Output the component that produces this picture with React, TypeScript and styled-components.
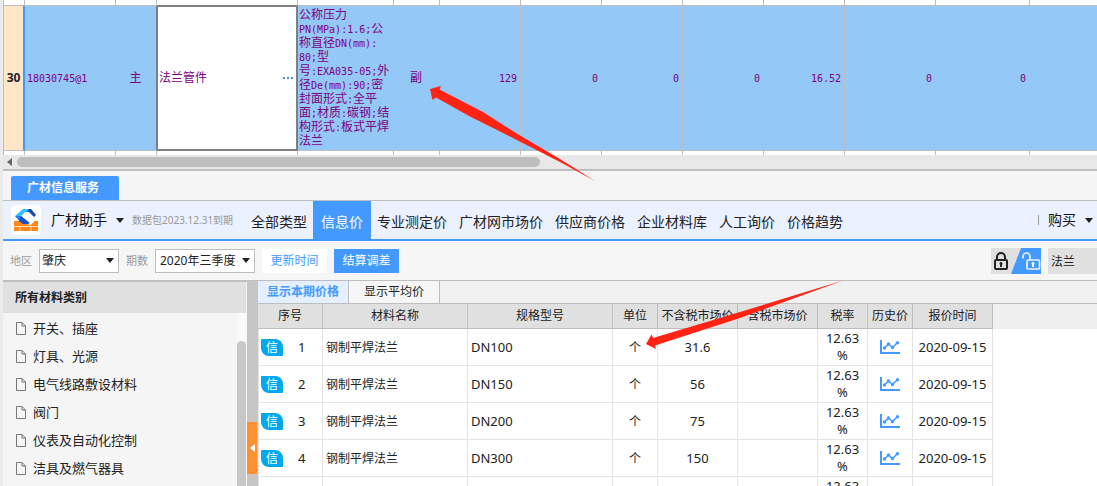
import React from "react";
import styled, { createGlobalStyle, css } from "styled-components";

const Global = createGlobalStyle`
  *, *::before, *::after { box-sizing: border-box; }
  body {
    margin: 0;
    background: #f5f5f5;
    color: #222;
    font: 12px/16px "Noto Sans", "Noto Sans CJK SC", sans-serif;
  }
  button, input, select { font: inherit; color: inherit; border: 0; padding: 0; border-radius: 0; }
  button { background: none; }
  a { color: inherit; text-decoration: none; }
  table { border-collapse: separate; border-spacing: 0; table-layout: fixed; width: 100%; }
  th, td { padding: 0; font-weight: 400; }
`;

const Window = styled.div`
  position: relative;
  display: flex;
  flex-direction: column;
  height: 100vh;
  overflow: hidden;
  border-left: 3px solid #ebebeb;
`;

/* ---------- quota grid ---------- */

const Grid = styled.table`
  flex: none;
  background: #fff;
  color: #800080;
`;

const gridLine = "1px solid #bebebe";

const EdgeCell = styled.td<{ $first?: boolean; $last?: boolean; $bottomLine?: string }>`
  height: ${(p) => (p.$bottomLine ? 6 : 4)}px;
  line-height: 0;
  border-left: ${(p) => (p.$first ? gridLine : 0)};
  border-right: ${(p) => (p.$last ? 0 : gridLine)};
  border-bottom: ${(p) => (p.$bottomLine ? `1px solid ${p.$bottomLine}` : 0)};
`;

const Cell = styled.td<{ $align?: string; $beforeEdit?: boolean; $last?: boolean }>`
  height: 145px;
  padding: 0 3px 0 2px;
  line-height: 14px;
  text-align: ${(p) => p.$align ?? "left"};
  vertical-align: middle;
  background: #93c8f7;
  border-right: ${(p) => (p.$last ? 0 : p.$beforeEdit ? "1px solid #808080" : gridLine)};
  border-bottom: ${gridLine};
`;

const SpecCell = styled(Cell)`
  padding: 0 0 0 1px;
  white-space: nowrap;
`;

const SpecLine = styled.div`
  height: 14px;
`;

const RowNumber = styled.th`
  background: #ffe6c8;
  color: #222;
  font-size: 12px;
  font-weight: 700;
  border-left: ${gridLine};
  border-right: 2px solid #4499ff;
  border-bottom: ${gridLine};
`;

const EditCell = styled.td`
  border: 2px solid #808080;
  border-width: 1px 2px 2px 1px;
  background: #fff;
`;

const EditRow = styled.div`
  display: flex;
  align-items: center;
  justify-content: space-between;
  padding: 0 3px 0 1px;
`;

const MoreButton = styled.button`
  display: flex;
  gap: 2px;
  i { width: 2px; height: 2px; background: #4a90d0; }
`;

const Half = styled.span`
  font: 10px/10px "DejaVu Sans Mono", monospace;
`;

/* Half-width characters take a fixed half of the ideograph width. */
const Mixed = ({ text }: { text: string }) => (
  <>
    {text.split(/([\x20-\x7e]+)/).map((run, i) => (i % 2 ? <Half key={i}>{run}</Half> : run))}
  </>
);

const HScroll = styled.div`
  display: flex;
  align-items: center;
  flex: none;
  height: 16px;
  padding-left: 4px;
  gap: 5px;
  background: #e8e8e8;
  border-bottom: 2px solid #bebebe;
`;

const HThumb = styled.div`
  width: 48%;
  height: 10px;
  border-radius: 5px;
  background: #bebebe;
`;

/* ---------- info service panel ---------- */

const PanelTabs = styled.div`
  flex: none;
  display: flex;
  height: 30px;
  padding: 5px 8px 0;
  border-bottom: 1px solid #bebebe;
`;

const PanelTab = styled.button`
  width: 108px;
  padding-right: 4px;
  background: #4499ff;
  color: #fff;
  font-weight: 700;
  border-radius: 2px 2px 0 0;
`;

const NavBar = styled.header`
  flex: none;
  display: flex;
  align-items: center;
  height: 40px;
  padding: 0 4px 0 8px;
  background: #ebf1ff;
  border-bottom: 2px solid #4499ff;
`;

const Brand = styled.div`
  display: flex;
  align-items: center;
  width: 234px;
  height: 30px;
`;

const LogoTile = styled.span`
  width: 30px;
  height: 30px;
  margin-right: 10px;
  border-radius: 4px;
  background: #fff;
`;

const MenuButton = styled.button`
  display: flex;
  align-items: center;
  gap: 9px;
  font-size: 14px;
  line-height: 20px;
  color: #111;
`;

const Expiry = styled.span`
  margin-left: 8px;
  font-size: 10px;
  color: #999;
  white-space: nowrap;
`;

const NavItems = styled.nav`
  display: flex;
  align-self: stretch;
  flex: 1;
`;

const NavItem = styled.a<{ $active?: boolean }>`
  display: flex;
  align-items: center;
  padding: 4px ${(p) => (p.$active ? 8 : 6)}px 0;
  font-size: 14px;
  white-space: nowrap;
  ${(p) => p.$active && css`background: #4499ff; color: #fff;`}
`;

const Divider = styled.span`
  width: 1px;
  height: 10px;
  margin-right: 9px;
  background: #999;
`;

const FilterBar = styled.div`
  flex: none;
  display: flex;
  align-items: center;
  height: 40px;
  padding-left: 7px;
  background: #f6f6f6;
  border-bottom: 1px solid #bebebe;
`;

const Label = styled.label`
  display: flex;
  align-items: center;
  gap: 7px;
  margin-right: 7px;
  font-size: 11px;
  color: #999;
`;

const SelectBox = styled.span<{ $width: number }>`
  display: flex;
  align-items: center;
  width: ${(p) => p.$width}px;
  height: 24px;
  padding-right: 4px;
  border: 1px solid #bebebe;
  background: #fff;
  select {
    flex: 1;
    min-width: 0;
    height: 22px;
    padding-left: ${(p) => (p.$width > 90 ? 4 : 2)}px;
    appearance: none;
    background: none;
    color: #222;
    font-size: 12px;
  }
`;

const Action = styled.button<{ $primary?: boolean }>`
  width: 65px;
  height: 24px;
  margin-right: 7px;
  background: ${(p) => (p.$primary ? "#4499ff" : "#fff")};
  color: ${(p) => (p.$primary ? "#fff" : "#4499ff")};
`;

const LockSwitch = styled.button`
  width: 50px;
  height: 26px;
  margin: 0 7px 0 auto;
  line-height: 0;
  background: #e0e0e0;
`;

const Search = styled.input`
  width: 49px;
  height: 26px;
  padding-left: 3px;
  background: #e0e0e0;
`;

const Body = styled.div`
  flex: 1;
  min-height: 0;
  display: flex;
`;

const Sidebar = styled.aside`
  display: flex;
  flex-direction: column;
  width: 244px;
  border-top: 1px solid #bebebe;
  border-right: 1px solid #f4f4f4;
`;

const SideTitle = styled.h2`
  flex: none;
  margin: 0;
  padding: 0 12px;
  height: 31px;
  font-size: 12px;
  line-height: 31px;
  background: #e0e0e0;
`;

const SideBody = styled.div`
  display: flex;
  flex: 1;
  min-height: 0;
`;

const CategoryList = styled.ul`
  flex: 1;
  margin: 0;
  padding: 1px 0 0 13px;
  list-style: none;
`;

const Category = styled.a`
  display: flex;
  align-items: center;
  gap: 7px;
  height: 28px;
  font-size: 13px;
`;

const VTrack = styled.div`
  width: 9px;
  padding-top: 28px;
  background: #fafafa;
`;

const VThumb = styled.div`
  height: 100%;
  border-radius: 5px 5px 0 0;
  background: #c8c8c8;
`;

const Splitter = styled.div`
  flex: none;
  width: 11px;
  padding-top: 141px;
  background: #c8c6c5;
`;

const Collapse = styled.button`
  display: flex;
  align-items: center;
  justify-content: center;
  width: 10px;
  height: 52px;
  background: #ff9133;
`;

const Results = styled.main`
  flex: 1;
  min-width: 0;
  background: #fff;
`;

const ResultTabs = styled.div`
  display: flex;
  height: 23px;
  background: #f1f1f1;
  border-bottom: 1px solid #bebebe;
`;

const ResultTab = styled.button<{ $active?: boolean }>`
  width: 91px;
  border-right: 1px solid #bebebe;
  background: ${(p) => (p.$active ? "#e4efff" : "#f6f6f6")};
  color: ${(p) => (p.$active ? "#4499ff" : "#222")};
  font-weight: ${(p) => (p.$active ? 700 : 400)};
`;

const Head = styled.th`
  height: 25px;
  background: #e0e0e0;
  border-right: 1px solid #bebebe;
  border-bottom: 1px solid #bebebe;
  white-space: nowrap;
`;

const HeadFill = styled.th`
  height: 25px;
  background: #f0f0f0;
`;

const Data = styled.td<{ $align?: string; $text?: boolean; $first?: boolean }>`
  height: 37px;
  padding: 0 3px;
  font-size: ${(p) => (p.$text ? 12 : 13)}px;
  line-height: 17px;
  text-align: ${(p) => p.$align ?? "center"};
  border-left: ${(p) => (p.$first ? "1px solid #e4e4e4" : 0)};
  border-right: 1px solid #e4e4e4;
  border-bottom: 1px solid #e4e4e4;
  svg { display: block; margin: auto; }
`;

const Index = styled.div`
  display: flex;
  align-items: center;
  gap: 15px;
`;

const Badge = styled.span`
  width: 22px;
  height: 17px;
  margin-left: -1px;
  border-radius: 1px 8px 1px 8px;
  background: #00a8f0;
  color: #fff;
  font-size: 12px;
  line-height: 17px;
`;

/* Callout arrows drawn over the window. */
const Callouts = styled.svg`
  position: absolute;
  top: 0;
  left: -3px;
  pointer-events: none;
`;

const Caret = () => (
  <svg width="8" height="5" viewBox="0 0 8 5"><path d="M0 0h8L4 5z" fill="#222" /></svg>
);

const Logo = () => (
  <svg width="30" height="30" viewBox="0 0 30 30">
    <path d="M3 16h24v10H3z" fill="#ff8719" />
    <path d="M3 21.500h24M9 21.500V26M20 21.500V26M19 20.500l4-4.500" stroke="#ffd9b0" fill="none" />
    <path d="M14 6h5l4 6v5l-4 3-9-3z" fill="#fff" />
    <path d="M12 4h8l-3 3h-3l-4 4H4z" fill="#2fc0ff" />
    <path d="M18 4h2l5 6-2 2-5-5h-2z" fill="#1446b0" />
    <path d="M4 11h6l3 3-4 3z" fill="#1d7cf5" />
    <path d="M10 11l9 7-2 1h-5l-4-3z" fill="#1650c4" />
  </svg>
);

const Locks = () => (
  <svg width="50" height="26" viewBox="0 0 50 26">
    <path d="M30 0h20v26H20z" fill="#4499ff" />
    <g fill="none" stroke="#222" strokeWidth="2">
      <rect x="4" y="12" width="12" height="9" rx="1" />
      <path d="M6 12V9a4 4 0 0 1 8 0v3" />
    </g>
    <path d="M10 14a1.500 1.500 0 0 1 1 2.600V19H9v-2.400A1.500 1.500 0 0 1 10 14z" fill="#222" />
    <g fill="none" stroke="#e8f2ff" strokeWidth="1.700">
      <rect x="36" y="12" width="12.500" height="9" rx="1" />
      <path d="M32 10.500V8.500a3.500 3.500 0 0 1 7 0V12" />
    </g>
    <path d="M42 14a1.500 1.500 0 0 1 1 2.600V19h-2v-2.400A1.500 1.500 0 0 1 42 14z" fill="#fff" />
  </svg>
);

const FileIcon = () => (
  <svg width="10" height="13" viewBox="0 0 10 13" fill="none" stroke="#777">
    <path d="M.5.5h5.700L9.500 4v8.500h-9z" />
    <path d="M6 .5V4h3.500" />
  </svg>
);

const TrendIcon = () => (
  <svg width="20" height="14" viewBox="0 0 20 14" fill="none" stroke="#4499ff">
    <path d="M1 0v13h19" strokeWidth="2" />
    <path d="M4.500 8l4-4 4 3.500 5-5" strokeWidth="1.500" />
    <g fill="#4499ff" stroke="none">
      <circle cx="4.500" cy="8" r="1.700" />
      <circle cx="8.500" cy="4" r="1.700" />
      <circle cx="12.500" cy="7.500" r="1.700" />
      <circle cx="17.500" cy="2.700" r="1.700" />
    </g>
  </svg>
);

const gridCols = [22, 91, 41, 141, 96, 46, 81, 81, 81, 81, 81, 91, 94];
const specLines = [
  "公称压力", "PN(MPa):1.6;公", "称直径DN(mm):", "80;型", "号:EXA035-05;外",
  "径De(mm):90;密", "封面形式:全平", "面;材质:碳钢;结", "构形式:板式平焊", "法兰",
];
const amounts = ["129", "0", "0", "0", "16.52", "0", "0"];
const navItems = ["全部类型", "信息价", "专业测定价", "广材网市场价", "供应商价格", "企业材料库", "人工询价", "价格趋势"];
const categories = ["开关、插座", "灯具、光源", "电气线路敷设材料", "阀门", "仪表及自动化控制", "洁具及燃气器具"];
const columns: [string, number][] = [
  ["序号", 65], ["材料名称", 145], ["规格型号", 145], ["单位", 45], ["不含税市场价", 80],
  ["含税市场价", 80], ["税率", 50], ["历史价", 45], ["报价时间", 80],
];
const rows = [["DN100", "31.6"], ["DN150", "56"], ["DN200", "75"], ["DN300", "150"]];

const EdgeRow = ({ top }: { top?: boolean }) => (
  <tr>
    {[...gridCols, 0].map((_, i) => (
      <EdgeCell
        key={i}
        $first={i === 0}
        $last={i === gridCols.length}
        $bottomLine={top ? (i === 3 ? "#808080" : "#bebebe") : undefined}
      />
    ))}
  </tr>
);

export default function App() {
  return (
    <>
      <Global />
      <Window>
        <Grid>
          <colgroup>
            {gridCols.map((w, i) => <col key={i} width={w} />)}
            <col />
          </colgroup>
          <tbody>
            <EdgeRow top />
            <tr>
              <RowNumber scope="row">30</RowNumber>
              <Cell><Mixed text="18030745@1" /></Cell>
              <Cell $align="center" $beforeEdit>主</Cell>
              <EditCell>
                <EditRow>
                  法兰管件
                  <MoreButton aria-label="更多"><i /><i /><i /></MoreButton>
                </EditRow>
              </EditCell>
              <SpecCell>
                {specLines.map((line) => <SpecLine key={line}><Mixed text={line} /></SpecLine>)}
              </SpecCell>
              <Cell $align="center">副</Cell>
              {amounts.map((value, i) => (
                <Cell key={i} $align="right"><Mixed text={value} /></Cell>
              ))}
              <Cell $last />
            </tr>
            <EdgeRow />
          </tbody>
        </Grid>
        <HScroll>
          <svg width="5" height="8" viewBox="0 0 5 8"><path d="M5 0v8L0 4z" fill="#666" /></svg>
          <HThumb />
        </HScroll>

        <PanelTabs><PanelTab>广材信息服务</PanelTab></PanelTabs>
        <NavBar>
          <Brand>
            <LogoTile><Logo /></LogoTile>
            <MenuButton>广材助手<Caret /></MenuButton>
            <Expiry>数据包2023.12.31到期</Expiry>
          </Brand>
          <NavItems>
            {navItems.map((item, i) => <NavItem key={item} href="#" $active={i === 1}>{item}</NavItem>)}
          </NavItems>
          <Divider />
          <MenuButton>购买<Caret /></MenuButton>
        </NavBar>
        <FilterBar>
          <Label>
            地区
            <SelectBox $width={80}><select><option>肇庆</option></select><Caret /></SelectBox>
          </Label>
          <Label>
            期数
            <SelectBox $width={100}><select><option>2020年三季度</option></select><Caret /></SelectBox>
          </Label>
          <Action>更新时间</Action>
          <Action $primary>结算调差</Action>
          <LockSwitch aria-label="锁定"><Locks /></LockSwitch>
          <Search aria-label="搜索" defaultValue="法兰" />
        </FilterBar>

        <Body>
          <Sidebar>
            <SideTitle>所有材料类别</SideTitle>
            <SideBody>
              <CategoryList>
                {categories.map((name) => (
                  <li key={name}><Category href="#"><FileIcon />{name}</Category></li>
                ))}
              </CategoryList>
              <VTrack><VThumb /></VTrack>
            </SideBody>
          </Sidebar>
          <Splitter>
            <Collapse aria-label="收起">
              <svg width="5" height="8" viewBox="0 0 5 8"><path d="M5 0v8L0 4z" fill="#fff" /></svg>
            </Collapse>
          </Splitter>
          <Results>
            <ResultTabs>
              <ResultTab $active>显示本期价格</ResultTab>
              <ResultTab>显示平均价</ResultTab>
            </ResultTabs>
            <table>
              <colgroup>
                {columns.map(([name, w]) => <col key={name} width={w} />)}
                <col />
              </colgroup>
              <thead>
                <tr>
                  {columns.map(([name]) => <Head key={name} scope="col">{name}</Head>)}
                  <HeadFill />
                </tr>
              </thead>
              <tbody>
                {rows.map(([spec, price], i) => (
                  <tr key={spec}>
                    <Data $first><Index><Badge>信</Badge>{i + 1}</Index></Data>
                    <Data $align="left" $text>钢制平焊法兰</Data>
                    <Data $align="left">{spec}</Data>
                    <Data $text>个</Data>
                    <Data>{price}</Data>
                    <Data />
                    <Data>12.63<br />%</Data>
                    <Data><TrendIcon /></Data>
                    <Data>2020-09-15</Data>
                    <td />
                  </tr>
                ))}
                <tr>
                  {columns.map(([name], i) => (
                    <Data key={name} $first={i === 0}>{name === "税率" && <>12.63<br />%</>}</Data>
                  ))}
                  <td />
                </tr>
              </tbody>
            </table>
          </Results>
        </Body>

        <Callouts width="1097" height="486" viewBox="0 0 1097 486" fill="#ff2314">
          <path d="M430 89L441 86L439.500 89.500L483 112L520 135.500L560 159L595 181L560 162L503 133L470 116.500L436 97.500L432.500 100z" />
          <path d="M646 344L651.500 334.500L653 338L740 312L843 280.500L740 318L655 345.500L656 349z" />
        </Callouts>
      </Window>
    </>
  );
}
